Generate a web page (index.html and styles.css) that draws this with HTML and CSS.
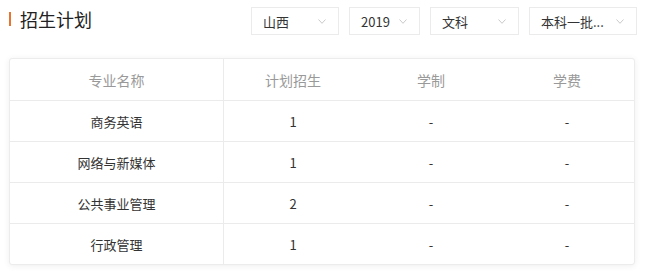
FILE: index.html
```html
<!DOCTYPE html>
<html lang="zh">
<head>
<meta charset="utf-8">
<link rel="stylesheet" href="styles.css">
</head>
<body>
<div class="page">
  <div class="top">
    <h2 class="title">招生计划</h2>
    <div class="filters">
      <div class="sel w88"><span>山西</span><svg class="chev" viewBox="0 0 8 5"><path d="M0.5 0.5 L4 4.3 L7.5 0.5" fill="none" stroke="#c4c4c4" stroke-width="0.9"/></svg></div>
      <div class="sel w71"><span>2019</span><svg class="chev" viewBox="0 0 8 5"><path d="M0.5 0.5 L4 4.3 L7.5 0.5" fill="none" stroke="#c4c4c4" stroke-width="0.9"/></svg></div>
      <div class="sel w89"><span>文科</span><svg class="chev" viewBox="0 0 8 5"><path d="M0.5 0.5 L4 4.3 L7.5 0.5" fill="none" stroke="#c4c4c4" stroke-width="0.9"/></svg></div>
      <div class="sel w108"><span>本科一批...</span><svg class="chev" viewBox="0 0 8 5"><path d="M0.5 0.5 L4 4.3 L7.5 0.5" fill="none" stroke="#c4c4c4" stroke-width="0.9"/></svg></div>
    </div>
  </div>
  <div class="card">
    <div class="row head">
      <div class="c c1">专业名称</div><div class="c c2">计划招生</div><div class="c c3">学制</div><div class="c c4">学费</div>
    </div>
    <div class="row">
      <div class="c c1">商务英语</div><div class="c c2">1</div><div class="c c3">-</div><div class="c c4">-</div>
    </div>
    <div class="row">
      <div class="c c1">网络与新媒体</div><div class="c c2">1</div><div class="c c3">-</div><div class="c c4">-</div>
    </div>
    <div class="row">
      <div class="c c1">公共事业管理</div><div class="c c2">2</div><div class="c c3">-</div><div class="c c4">-</div>
    </div>
    <div class="row last">
      <div class="c c1">行政管理</div><div class="c c2">1</div><div class="c c3">-</div><div class="c c4">-</div>
    </div>
  </div>
</div>
</body>
</html>
```
FILE: styles.css
```css
* { box-sizing: border-box; }
html, body { margin: 0; padding: 0; background: #fff; }
body {
  font-family: "Noto Sans CJK SC", "Noto Sans", "Liberation Sans", sans-serif;
  color: #333;
  width: 646px;
  height: 277px;
  overflow: hidden;
}
.page { padding: 7px 10px 0 9px; }
.top {
  display: flex;
  justify-content: space-between;
  align-items: flex-start;
  height: 51px;
}
.title {
  margin: 5px 0 0 0;
  font-size: 18px;
  font-weight: normal;
  line-height: 14px;
  padding-left: 9px;
  border-left: 2px solid #e8742f;
  color: #222;
  height: 14px;
  display: flex;
  align-items: center;
}
.filters { display: flex; gap: 10px; margin-right: -1px; }
.sel {
  height: 28px;
  border: 1px solid #ebebeb;
  display: flex;
  align-items: center;
  justify-content: space-between;
  padding: 0 12px 0 11px;
  font-size: 13px;
  color: #333;
}
.sel span { line-height: 1; }
.chev { width: 8px; height: 5px; }
.w88 { width: 88px; }
.w71 { width: 71px; }
.w89 { width: 89px; }
.w108 { width: 108px; }
.card {
  width: 626px;
  border: 1px solid #ececec;
  border-radius: 3px;
  box-shadow: 0 1px 6px rgba(0,0,0,0.07);
  background: #fff;
}
.row {
  display: flex;
  height: 41px;
  border-bottom: 1px solid #ebebeb;
}
.row.head { height: 42px; }
.row.last { border-bottom: none; height: 40px; }
.c {
  display: flex;
  align-items: center;
  justify-content: center;
  font-size: 13px;
  color: #333;
}
.head .c { color: #999; font-size: 14px; }
.c1 { width: 214px; border-right: 1px solid #ebebeb; }
.c2 { width: 138px; }
.c3 { width: 138px; }
.c4 { flex: 1; }
```
